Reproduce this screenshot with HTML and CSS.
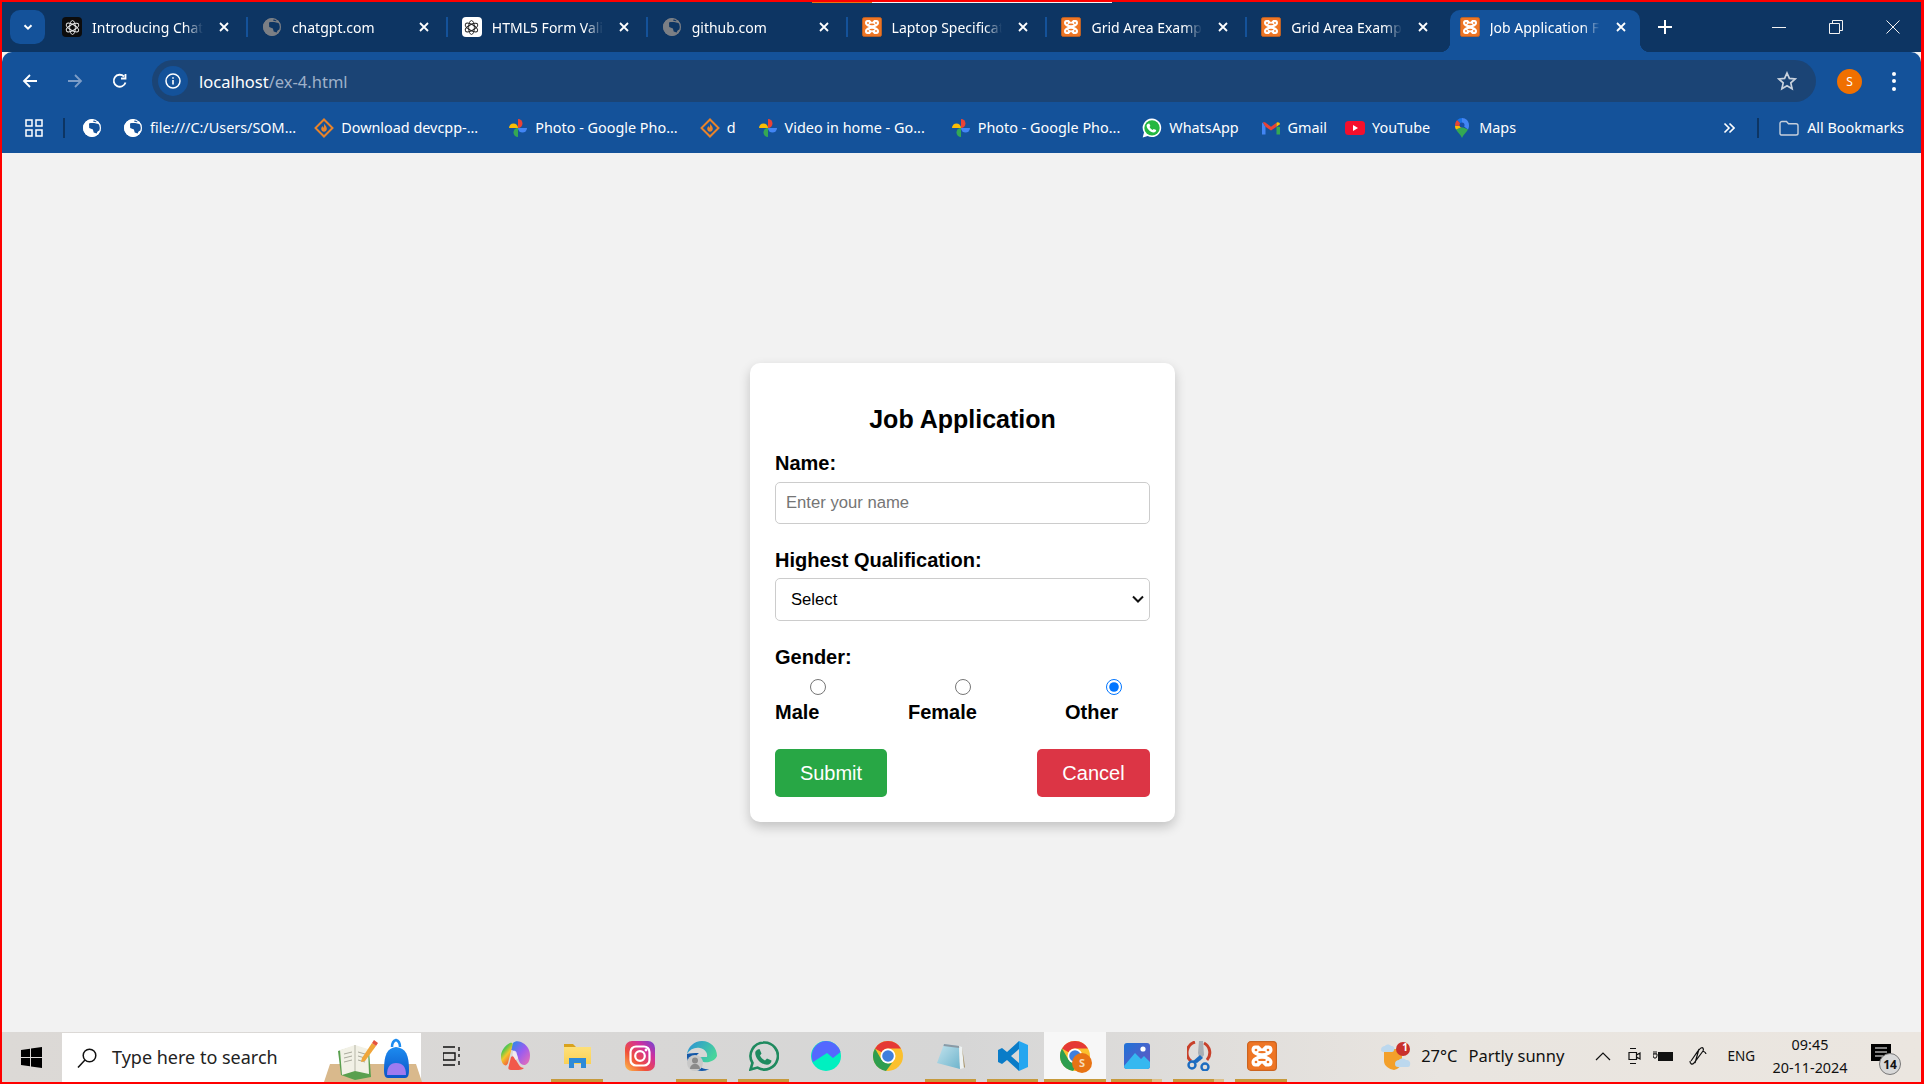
FILE: index.html
```html
<!DOCTYPE html>
<html lang="en">
<head>
  <meta charset="UTF-8">
  <meta name="viewport" content="width=device-width, initial-scale=1.0">
  <title>Job Application</title>
  <link rel="stylesheet" href="styles.css">
</head>
<body>
  <svg class="defs" aria-hidden="true">
    <defs>
      <linearGradient id="igGrad" x1="0" y1="1" x2="1" y2="0">
        <stop offset="0" stop-color="#fdc14a"/><stop offset=".35" stop-color="#f0513a"/><stop offset=".7" stop-color="#d12f9c"/><stop offset="1" stop-color="#6a47d8"/>
      </linearGradient>
      <linearGradient id="copGrad" x1="0" y1="0" x2=".6" y2="1">
        <stop offset="0" stop-color="#2fb6c8"/><stop offset=".35" stop-color="#5cc84a"/><stop offset=".6" stop-color="#f4c62a"/><stop offset="1" stop-color="#f0563e"/>
      </linearGradient>
      <linearGradient id="copGrad2" x1="0" y1="0" x2="1" y2="1">
        <stop offset="0" stop-color="#1f8fe8"/><stop offset=".5" stop-color="#9a5cf0"/><stop offset="1" stop-color="#f070b0"/>
      </linearGradient>
      <linearGradient id="edgeGrad" x1="0" y1="0" x2="1" y2=".5">
        <stop offset="0" stop-color="#2a8fd8"/><stop offset="1" stop-color="#48d49c"/>
      </linearGradient>
      <linearGradient id="photoGrad" x1="0" y1="0" x2="1" y2="1">
        <stop offset="0" stop-color="#1e73d8"/><stop offset="1" stop-color="#6a55c0"/>
      </linearGradient>
      <linearGradient id="bagGrad" x1="0" y1="0" x2="0" y2="1">
        <stop offset="0" stop-color="#1c8cf0"/><stop offset="1" stop-color="#0c55c8"/>
      </linearGradient>
      <linearGradient id="padGrad" x1="0" y1="0" x2="1" y2="1">
        <stop offset="0" stop-color="#c4e4ee"/><stop offset="1" stop-color="#6fb4cc"/>
      </linearGradient>
      <linearGradient id="folderGrad" x1="0" y1="0" x2="0" y2="1">
        <stop offset="0" stop-color="#fde07a"/><stop offset="1" stop-color="#fbd155"/>
      </linearGradient>
      <symbol id="i-xampp" viewBox="0 0 20 20">
        <rect x=".4" y=".4" width="19.200" height="19.200" rx="2.200" fill="#ee7524" stroke="#cc6420" stroke-width=".8"/>
        <path fill="#fff" d="M5.500 3h2.300L10 5.200 12.200 3h2.300c1.700 0 2.500 1.300 2.500 3 0 1.800-1.500 3-4 4 2.500 1 4 2.200 4 4 0 1.700-.8 3-2.500 3h-2.300L10 14.800 7.800 17H5.500C3.800 17 3 15.700 3 14c0-1.800 1.500-3 4-4C4.500 9 3 7.800 3 6c0-1.700.8-3 2.500-3z"/>
        <ellipse cx="10" cy="7.400" rx="2.600" ry=".8" fill="#ee7524"/>
        <ellipse cx="10" cy="12.600" rx="2.600" ry=".8" fill="#ee7524"/>
        <circle cx="6" cy="6" r=".9" fill="#ee7524"/>
        <circle cx="14" cy="6" r=".9" fill="#ee7524"/>
        <circle cx="6" cy="14" r=".9" fill="#ee7524"/>
        <circle cx="14" cy="14" r=".9" fill="#ee7524"/>
      </symbol>
      <symbol id="i-knot" viewBox="0 0 20 20">
        <g fill="none" stroke="currentColor" stroke-width="1.100">
          <ellipse cx="10" cy="10" rx="3.400" ry="8.200"/>
          <ellipse cx="10" cy="10" rx="3.400" ry="8.200" transform="rotate(60 10 10)"/>
          <ellipse cx="10" cy="10" rx="3.400" ry="8.200" transform="rotate(120 10 10)"/>
        </g>
      </symbol>
      <symbol id="i-globe" viewBox="0 0 20 20">
        <circle cx="10" cy="10" r="9" fill="currentColor"/>
        <path fill="var(--cut)" d="M7 5.500c3-1 7-.5 11.500 1.500.6 2 .4 4-.3 5.500-2 0-3 1-3.500 3l-3-1-.8-3-3.700-1.500zM12 1.200l-1 2.300 3 .7 2-1.200c-1.100-.9-2.500-1.500-4-1.800z"/>
        <circle cx="10" cy="10" r="8.400" fill="none" stroke="currentColor" stroke-width="1.200"/>
      </symbol>
      <symbol id="i-diamond" viewBox="0 0 20 20">
        <rect x="4" y="4" width="12" height="12" fill="none" stroke="#e8832a" stroke-width="2" transform="rotate(45 10 10)"/>
        <path fill="#e8832a" d="M10.500 5.500c.5 2 2.300 3.200 2.300 5.300 0 1.700-1.300 3-2.800 3s-2.800-1.300-2.800-3c0-1.200.7-2 1.400-2.800.2 1 .6 1.500 1.100 1.700.3-1.400.4-2.800.8-4.200z"/>
      </symbol>
      <symbol id="i-pinwheel" viewBox="0 0 20 20">
        <path fill="#fbbc04" d="M1 10a4.500 4.500 0 0 1 9 0z"/>
        <path fill="#ea4335" d="M10 1a4.500 4.500 0 0 1 0 9z"/>
        <path fill="#4285f4" d="M10 10h9a4.500 4.500 0 0 1-9 0z"/>
        <path fill="#34a853" d="M10 10v9a4.500 4.500 0 0 1 0-9z"/>
      </symbol>
      <symbol id="i-whatsapp" viewBox="0 0 20 20">
        <path fill="#fff" d="M10 .5a9.300 9.300 0 0 0-8 14L.7 19.400l5-1.300A9.300 9.300 0 1 0 10 .5z"/>
        <circle cx="10" cy="9.900" r="7.700" fill="#25b741"/>
        <path fill="#fff" d="M7.300 5.400l1.100 2.500-.9 1.200c.7 1.300 1.700 2.300 3.100 3l1.100-1.200 2.500 1.100c0 1.500-1.100 2.500-2.600 2.500-3.500-.2-6.900-3.600-7-6.900 0-1.100.9-2 2.700-2.200z"/>
      </symbol>
      <symbol id="i-gmail" viewBox="0 0 20 20">
        <path fill="#4285f4" d="M1 6v10.500h3.500V8.800L1.800 4.500C1.300 4.700 1 5.300 1 6z"/>
        <path fill="#ea4335" d="M1.800 4.500l2.700 4.300L10 12.500l5.500-3.700V4.800L10 8.800 4 4.300c-.8-.3-1.600-.2-2.200.2z"/>
        <path fill="#34a853" d="M15.500 16.500H19V9l-3.500-.2z"/>
        <path fill="#fbbc04" d="M15.500 8.800L19 6.300c0-1.700-1.700-2.600-3-1.900l-.5.400z"/>
      </symbol>
      <symbol id="i-youtube" viewBox="0 0 20 20">
        <rect y="3" width="20" height="14" rx="3.500" fill="#f50f2c"/>
        <path fill="#fff" d="M8 7l5 3-5 3z"/>
      </symbol>
      <symbol id="i-maps" viewBox="0 0 20 20">
        <path fill="#34a853" d="M10 20C8.800 17 5.800 14.500 4 11.500L10 9l6 2.500C14.200 14.500 11.200 17 10 20z"/>
        <path fill="#fbbc04" d="M4 11.500C3.200 10.400 3 9 3 7.500L7.500 8 10 9z"/>
        <path fill="#4285f4" d="M10 0c4 0 7 3.200 7 7.200 0 1.700-.3 3-1 4.300L10 7z"/>
        <path fill="#ea4335" d="M3 7.500C3 5 4 3 5.300 2L10 7 7.500 8z"/>
        <path fill="#1a73e8" d="M5.300 2C6.500.8 8.200 0 10 0v7z"/>
        <circle cx="10" cy="7" r="2.500" fill="#174ea6"/>
      </symbol>
      <symbol id="i-chrome" viewBox="0 0 30 30">
        <circle cx="15" cy="15" r="15" fill="#fbc02d"/>
        <path fill="#e53935" d="M15 0a15 15 0 0 1 13 7.500H15a7.500 7.500 0 0 0-6.500 3.750L2 7.500A15 15 0 0 1 15 0z"/>
        <path fill="#2e9e4f" d="M2 7.500a15 15 0 0 0 11 22.400l6-7.900-4 .5-6.500-3.750z"/>
        <circle cx="15" cy="15" r="7.500" fill="#fff"/>
        <circle cx="15" cy="15" r="5.800" fill="#3f7fdc"/>
      </symbol>
    </defs>
  </svg>

  <div class="screen">
    <div class="load-bar"></div>

    <div class="tabstrip">
      <button class="tab-search" aria-label="Search tabs">
        <svg width="12" height="12" viewBox="0 0 12 12"><path d="M2.500 4.200L6 7.700l3.500-3.500" fill="none" stroke="#fff" stroke-width="2"/></svg>
      </button>
      <div class="tab">
        <span class="fav fav-dark"><svg width="17" height="17"><use href="#i-knot"/></svg></span>
        <span class="tab-title">Introducing Chat</span>
        <svg class="tab-close" viewBox="0 0 10 10"><path d="M1 1l8 8M9 1l-8 8"/></svg>
      </div>
      <div class="tab">
        <svg class="fav globe-grey"><use href="#i-globe"/></svg>
        <span class="tab-title">chatgpt.com</span>
        <svg class="tab-close" viewBox="0 0 10 10"><path d="M1 1l8 8M9 1l-8 8"/></svg>
      </div>
      <div class="tab">
        <span class="fav fav-light"><svg width="17" height="17"><use href="#i-knot"/></svg></span>
        <span class="tab-title">HTML5 Form Vali</span>
        <svg class="tab-close" viewBox="0 0 10 10"><path d="M1 1l8 8M9 1l-8 8"/></svg>
      </div>
      <div class="tab">
        <svg class="fav globe-grey"><use href="#i-globe"/></svg>
        <span class="tab-title">github.com</span>
        <svg class="tab-close" viewBox="0 0 10 10"><path d="M1 1l8 8M9 1l-8 8"/></svg>
      </div>
      <div class="tab">
        <svg class="fav"><use href="#i-xampp"/></svg>
        <span class="tab-title">Laptop Specificat</span>
        <svg class="tab-close" viewBox="0 0 10 10"><path d="M1 1l8 8M9 1l-8 8"/></svg>
      </div>
      <div class="tab">
        <svg class="fav"><use href="#i-xampp"/></svg>
        <span class="tab-title">Grid Area Examp</span>
        <svg class="tab-close" viewBox="0 0 10 10"><path d="M1 1l8 8M9 1l-8 8"/></svg>
      </div>
      <div class="tab tab-last">
        <svg class="fav"><use href="#i-xampp"/></svg>
        <span class="tab-title">Grid Area Examp</span>
        <svg class="tab-close" viewBox="0 0 10 10"><path d="M1 1l8 8M9 1l-8 8"/></svg>
      </div>
      <div class="tab tab-active">
        <svg class="fav"><use href="#i-xampp"/></svg>
        <span class="tab-title">Job Application F</span>
        <svg class="tab-close" viewBox="0 0 10 10"><path d="M1 1l8 8M9 1l-8 8"/></svg>
      </div>
      <svg class="new-tab" viewBox="0 0 14 14"><path d="M7 0v14M0 7h14"/></svg>
      <div class="win-controls">
        <svg viewBox="0 0 14 14"><path d="M0 7.500h14"/></svg>
        <svg viewBox="0 0 14 14"><path d="M.5 3.500h10v10H.500zM3.500 3.500V.5h10v10h-3"/></svg>
        <svg viewBox="0 0 14 14"><path d="M.5.5l13 13M13.500.5l-13 13"/></svg>
      </div>
    </div>

    <div class="chrome-body">
      <div class="toolbar">
        <span class="nav-btn">
          <svg viewBox="0 0 16 16" class="nav-icon"><path d="M15 8H2M8 2L2 8l6 6"/></svg>
        </span>
        <span class="nav-btn nav-off">
          <svg viewBox="0 0 16 16" class="nav-icon"><path d="M1 8h13M8 2l6 6-6 6"/></svg>
        </span>
        <span class="nav-btn">
          <svg viewBox="0 0 16 16" class="nav-icon"><path d="M13.500 9.500A6 6 0 1 1 12 3.500M13.500 1v4.500H9"/></svg>
        </span>
        <div class="omnibox">
          <span class="site-chip">
            <svg width="16" height="16" viewBox="0 0 16 16"><circle cx="8" cy="8" r="7" fill="none" stroke="#fff" stroke-width="1.500"/><path d="M8 7v4.500M8 4.200v1.500" stroke="#fff" stroke-width="1.600"/></svg>
          </span>
          <span class="url">localhost<span class="url-path">/ex-4.html</span></span>
          <svg class="star" viewBox="0 0 20 20"><path d="M10 2l2.400 5.400 5.800.6-4.400 3.900 1.300 5.800L10 14.700l-5.100 3 1.300-5.800L1.800 8l5.800-.6z"/></svg>
        </div>
        <span class="avatar">S</span>
        <span class="menu-dots"><i></i><i></i><i></i></span>
      </div>

      <div class="bookmarks">
        <svg class="apps" viewBox="0 0 18 18"><path d="M1 1h6v6H1zM11 1h6v6h-6zM1 11h6v6H1zM11 11h6v6h-6z"/></svg>
        <span class="bar-sep"></span>
        <svg class="bm-icon globe-white first-globe"><use href="#i-globe"/></svg>
        <div class="bm-list">
          <a class="bm"><svg class="bm-icon globe-white"><use href="#i-globe"/></svg>file:///C:/Users/SOM...</a>
          <a class="bm bm-tight"><svg class="bm-icon"><use href="#i-diamond"/></svg>Download devcpp-...</a>
          <a class="bm bm-wide"><svg class="bm-icon"><use href="#i-pinwheel"/></svg>Photo - Google Pho...</a>
          <a class="bm"><svg class="bm-icon"><use href="#i-diamond"/></svg>d</a>
          <a class="bm"><svg class="bm-icon"><use href="#i-pinwheel"/></svg>Video in home - Go...</a>
          <a class="bm bm-loose"><svg class="bm-icon"><use href="#i-pinwheel"/></svg>Photo - Google Pho...</a>
          <a class="bm"><svg class="bm-icon"><use href="#i-whatsapp"/></svg>WhatsApp</a>
          <a class="bm"><svg class="bm-icon"><use href="#i-gmail"/></svg>Gmail</a>
          <a class="bm bm-tight"><svg class="bm-icon"><use href="#i-youtube"/></svg>YouTube</a>
          <a class="bm"><svg class="bm-icon"><use href="#i-maps"/></svg>Maps</a>
        </div>
        <svg class="bm-more" viewBox="0 0 12 12"><path d="M1.500 1.500L6 6l-4.500 4.500M6.500 1.500L11 6l-4.500 4.500"/></svg>
        <span class="bar-sep bar-sep-right"></span>
        <a class="bm bm-all">
          <svg class="bm-icon folder" viewBox="0 0 20 16"><path d="M1 3.500c0-1 .7-2 2-2h4.500l2 2.300H17c1.300 0 2 .7 2 2v7.700c0 1-.7 1.500-2 1.500H3c-1.300 0-2-.5-2-1.500z"/></svg>All Bookmarks
        </a>
      </div>
    </div>

    <main class="page">
      <form class="card">
        <h2>Job Application</h2>
        <label class="field-label" for="name">Name:</label>
        <input class="text-input" type="text" id="name" placeholder="Enter your name">
        <label class="field-label" for="qual">Highest Qualification:</label>
        <div class="select-wrap">
          <select class="select-input" id="qual">
            <option>Select</option>
          </select>
          <svg class="select-arrow" viewBox="0 0 12 8"><path d="M1 1.500l5 5 5-5"/></svg>
        </div>
        <div class="field-label">Gender:</div>
        <div class="gender-row">
          <label class="gender gender-male"><input type="radio" name="gender">Male</label>
          <label class="gender gender-female"><input type="radio" name="gender">Female</label>
          <label class="gender gender-other"><input type="radio" name="gender" checked>Other</label>
        </div>
        <div class="actions">
          <button type="button" class="btn btn-submit">Submit</button>
          <button type="button" class="btn btn-cancel">Cancel</button>
        </div>
      </form>
    </main>

    <footer class="taskbar">
      <div class="start">
        <svg width="21" height="21" viewBox="0 0 21 21"><path fill="#000" d="M0 3l9-1.300V10H0zM10 1.500L21 0v10H10zM0 11h9v8.300L0 18zM10 11h11v10l-11-1.500z"/></svg>
      </div>
      <div class="search">
        <svg class="search-icon" viewBox="0 0 20 20"><circle cx="12.500" cy="7.500" r="6.300"/><path d="M8 12L1 19.500"/></svg>
        <span class="search-text">Type here to search</span>
        <div class="search-art">
          <svg width="98" height="49" viewBox="0 0 98 49">
            <path d="M6 31h86l6 18H0z" fill="#d9b98c"/>
            <path d="M14 18l17-5 14 4 2 27-16 3-14-5z" fill="#5aa04f"/>
            <path d="M16 17l15-5 13 4 1 25-14-3-13 4z" fill="#f2f1e6"/>
            <path d="M31 12v26" stroke="#b7b7a8"/>
            <path d="M20 21l8-2M20 25l8-2M20 29l8-2M34 19l7 2M34 23l7 2M34 27l7 2" stroke="#a9a99c"/>
            <path d="M38 25l10-15 4 3-11 15-4 1z" fill="#f0a63a"/>
            <path d="M48 10l2-3 4 3-2 3z" fill="#e5533d"/>
            <path d="M60 37c0-15 3-22 12-23 10 1 13 8 13 23 0 5-1 8-4 8H64c-3 0-4-3-4-8z" fill="url(#bagGrad)"/>
            <path d="M68 14c0-4 1-6 4-7 3 1 4 3 4 7" fill="none" stroke="#1c8cf0" stroke-width="2.500"/>
            <path d="M63 42c0-8 3-12 9-12 7 0 10 4 10 12z" fill="#9d7bf0"/>
          </svg>
        </div>
      </div>
      <div class="task-slots">
        <div class="slot">
          <svg width="20" height="20" viewBox="0 0 20 20" fill="none" stroke="#111" stroke-width="1.400"><path d="M0 1h12M0 19h12M0 7h12v7H0zM16 1v4M16 8v3M16 15v4"/></svg>
        </div>
        <div class="slot">
          <svg width="30" height="30" viewBox="0 0 30 30">
            <path d="M13 2c2-2 5-2 8-1 5 2 9 7 9 13s-2 9-5 10c-2 .5-5-1-6-4l-2-6c-1-3-4-5-6-5 .5-3 1-5 2-7z" fill="url(#copGrad2)"/>
            <path d="M1 15c0-5 4-11 9-13 2-.5 3 .5 2.500 2L10 14l-2 8c-1 3-3 3-5 1-1.500-2-2-5-2-8z" fill="url(#copGrad)"/>
            <path d="M11 16c1-1 2-1 3 0l5 8c1 2 3 3 5 3-2 2-5 2-8 2h-5c-2 0-3-1-2.500-3z" fill="#f2584a"/>
            <path d="M13 10c1.500-.5 3 0 3.500 1.500l1.500 6-2.500 1.500-3-5z" fill="#f4ecf6" opacity=".85"/>
          </svg>
        </div>
        <div class="slot slot-on">
          <svg width="28" height="24" viewBox="0 0 28 24"><path d="M1 0h9l3 3H1z" fill="#d9a21e"/><path d="M1 3h27v17H1z" fill="url(#folderGrad)"/><path d="M6 24v-10h17v10h-5v-5h-7v5z" fill="#2d8ad8"/></svg>
        </div>
        <div class="slot">
          <svg width="30" height="30" viewBox="0 0 30 30"><rect width="30" height="30" rx="7" fill="url(#igGrad)"/><rect x="5.500" y="5.500" width="19" height="19" rx="5.500" fill="none" stroke="#fff" stroke-width="2.200"/><circle cx="15" cy="15" r="4.800" fill="none" stroke="#fff" stroke-width="2.200"/><circle cx="21" cy="9" r="1.400" fill="#fff"/></svg>
        </div>
        <div class="slot slot-on">
          <svg width="30" height="30" viewBox="0 0 30 30"><path d="M15 0C7 0 1 6 0 13c3-5 8-7 13-6 5 1 8 5 7 9h-7c-1 4 4 6 9 5 4-1 7-3 8-6C30 7 24 0 15 0z" fill="url(#edgeGrad)"/><path d="M0 13c-1 9 6 17 15 17 3 0 5-1 7-2-6 1-12-3-13-9-.5-3 1-6 3-7-5 0-9 0-12 1z" fill="#1458a8"/><circle cx="8" cy="22" r="8" fill="#c8c8c8"/><circle cx="8" cy="19.500" r="3" fill="#8a8a8a"/><path d="M3 28c0-3 2-5 5-5s5 2 5 5z" fill="#8a8a8a"/></svg>
        </div>
        <div class="slot slot-on">
          <svg width="30" height="30" viewBox="0 0 30 30"><path d="M15 1.500a13.500 13.500 0 0 0-11.500 20.500L1.500 28.500l7-1.900A13.500 13.500 0 1 0 15 1.500z" fill="none" stroke="#1f8a5f" stroke-width="2.600"/><path d="M10.500 8l2 4.500-1.500 2c1 2.200 2.700 3.800 5 5l2-2 4.500 2c0 2.600-2 4.300-4.500 4.300-6-.4-11.500-6-11.800-11.800 0-2 1.600-3.600 4.300-4z" fill="#1f8a5f"/></svg>
        </div>
        <div class="slot">
          <svg width="30" height="30" viewBox="0 0 30 30"><circle cx="15" cy="15" r="15" fill="#00f0c0"/><path d="M15 0a15 15 0 0 1 14.500 11l-7.500 6-6-5-14 9A15 15 0 0 1 15 0z" fill="#5468ff"/></svg>
        </div>
        <div class="slot">
          <svg width="30" height="30"><use href="#i-chrome"/></svg>
        </div>
        <div class="slot slot-on">
          <svg width="28" height="26" viewBox="0 0 28 26"><path d="M7 1l15 2 1 23-23-6z" fill="url(#padGrad)"/><path d="M22 3l3 1 2 21-4 1z" fill="#eef2f2"/><path d="M25 4l3 20-1 1z" fill="#a89468"/><path d="M7 1l15 2 .2 2L6.500 3z" fill="#8b99a4"/></svg>
        </div>
        <div class="slot slot-on">
          <svg width="30" height="30" viewBox="0 0 30 30"><path d="M21 0v8l-8 7 8 7v8L9 19l-5 4-4-2v-12l4-2 5 4z" fill="#0a7cc8"/><path d="M21 0l9 4v22l-9 4z" fill="#25a6f0"/></svg>
        </div>
        <div class="slot slot-on slot-active">
          <span class="chrome-s">
            <svg width="30" height="30"><use href="#i-chrome"/></svg>
            <span class="chrome-badge">S</span>
          </span>
        </div>
        <div class="slot slot-split">
          <svg width="26" height="26" viewBox="0 0 26 26"><rect width="26" height="26" rx="3" fill="url(#photoGrad)"/><path d="M0 23l11-13 6 6 3-3 6 6v4c0 2-1 3-3 3H3c-2 0-3-1-3-3z" fill="#35b8f0"/><circle cx="19" cy="6" r="2.600" fill="#fff"/></svg>
        </div>
        <div class="slot slot-split">
          <svg width="25" height="30" viewBox="0 0 25 30"><path d="M8 1a11 11 0 0 0-4 19" fill="none" stroke="#c8402a" stroke-width="3"/><path d="M17 2a11 11 0 0 1 3 17" fill="none" stroke="#c8402a" stroke-width="3"/><path d="M12 0h4l1 14-4 6-2-8z" fill="#a8aeb4"/><path d="M5 21l8-7 3 3-6 5" fill="#1c6cc0"/><circle cx="5" cy="24" r="3.500" fill="none" stroke="#1c6cc0" stroke-width="2.400"/><circle cx="18" cy="26" r="3.500" fill="none" stroke="#1c6cc0" stroke-width="2.400"/></svg>
        </div>
        <div class="slot slot-on">
          <svg width="30" height="30"><use href="#i-xampp"/></svg>
        </div>
      </div>

      <div class="tray">
        <svg class="weather-icon" width="30" height="30" viewBox="0 0 30 30">
          <path d="M3 8h18v12c0 5-4 8-8 9-5-1-10-4-10-9z" fill="#f3a02b"/>
          <path d="M0 9c0-3 2-4 4-4 1-2 5-2 6 0 3 0 4 2 3 4 0 1-1 2-2 2H3C1 11 0 10 0 9z" fill="#bcd8ee"/>
          <path d="M14 23c0-3 2-4 4-4 1-2 5-2 7 0 3 0 5 2 4 5 0 1-1 2-2 2H17c-2 0-3-1-3-3z" fill="#bcd8ee"/>
          <circle cx="22" cy="8" r="7" fill="#c9302c"/>
        </svg>
        <span class="weather-badge">1</span>
        <span class="temp">27°C</span>
        <span class="weather-text">Partly sunny</span>
        <svg class="tray-icon tray-chevron" viewBox="0 0 16 10"><path d="M1 9l7-7 7 7"/></svg>
        <svg class="tray-icon tray-cam" viewBox="0 0 14 18"><path d="M2 5.500h7.500v7H2zM9.500 8l3.500-2v6l-3.500-2M3 1.500h6M3 16.500h6"/></svg>
        <svg class="tray-battery" viewBox="0 0 20 12"><path d="M5 2h15v9H5z" fill="#111"/><path d="M1 1v3M3 1v3M0 4h4v2L3 8H1L0 6z" fill="none" stroke="#111"/></svg>
        <svg class="tray-icon tray-pen" viewBox="0 0 20 20"><path d="M2 15c0 3 2 4 4 2l9-12c1-2 0-4-2-3-1 .5-2 2-3 3L3 15M15 5c2 1 3 2 3 3M11 3l-4 14"/></svg>
        <span class="lang">ENG</span>
        <div class="clock"><span>09:45</span><span>20-11-2024</span></div>
        <div class="notif">
          <svg width="20" height="17" viewBox="0 0 20 17"><path fill="#000" d="M0 0h20v17H0z"/><path d="M4 4h12M4 8h12M4 12h8" stroke="#fff"/></svg>
          <span class="notif-count">14</span>
        </div>
      </div>
    </footer>
  </div>
</body>
</html>
```

FILE: styles.css
```css
* {
  box-sizing: border-box;
}
html, body {
  margin: 0;
  height: 100%;
}
body {
  font-family: "Liberation Sans", Arial, sans-serif;
  overflow: hidden;
}
.defs {
  position: absolute;
  width: 0;
  height: 0;
}
.screen {
  position: relative;
  width: 1924px;
  height: 1084px;
  border: solid #ff0000;
  border-width: 2px 3px 2px 2px;
  display: flex;
  flex-direction: column;
  background: #f2f2f2;
}
.load-bar {
  position: absolute;
  top: 0;
  left: 810px;
  width: 300px;
  height: 1px;
  background: linear-gradient(to right, #e8760e 60px, #f4f4f4 60px);
}

/* tab strip */
.tabstrip {
  height: 50px;
  flex: none;
  display: flex;
  padding-left: 8px;
  padding-top: 8px;
  background: #0d3563;
  font-family: "Noto Sans", sans-serif;
  font-size: 14px;
  color: #fff;
}
.tab-search {
  width: 35px;
  height: 34px;
  margin-right: 3px;
  border: none;
  padding: 0;
  border-radius: 10px;
  background: #14529a;
  display: flex;
  align-items: center;
  justify-content: center;
}
.tab {
  position: relative;
  width: 199.900px;
  height: 42px;
  flex: none;
  display: flex;
  align-items: center;
  padding: 0 19px 8px 14px;
}
.tab::after {
  content: "";
  position: absolute;
  right: 0;
  top: 7px;
  width: 2px;
  height: 20px;
  background: #14529a;
}
.tab-last::after,
.tab-active::after {
  display: none;
}
.fav {
  width: 20px;
  height: 20px;
  flex: none;
  margin-right: 10px;
}
.fav-dark,
.fav-light {
  display: flex;
  align-items: center;
  justify-content: center;
  border-radius: 4px;
}
.fav-dark {
  background: #0c0c0c;
  color: #e8e8e8;
}
.fav-light {
  background: #fff;
  color: #222;
}
.globe-grey {
  color: #7b7f85;
  --cut: #0d3563;
}
.tab-title {
  flex: 1;
  min-width: 0;
  white-space: nowrap;
  -webkit-mask-image: linear-gradient(to right, #000 84%, transparent 100%);
  mask-image: linear-gradient(to right, #000 84%, transparent 100%);
}
.tab-close {
  width: 10px;
  height: 10px;
  flex: none;
  margin-left: 16px;
  fill: none;
  stroke: #fff;
  stroke-width: 1.800;
}
.tab-active {
  width: 190px;
  margin-left: 2.500px;
  margin-right: 7px;
  padding: 0 14px 8px 10px;
  background: #14529a;
  border-radius: 10px 10px 0 0;
}
.tab-active .fav {
  margin-right: 10px;
}
.tab-active::before {
  content: "";
  position: absolute;
  left: -10px;
  right: -10px;
  bottom: 0;
  height: 10px;
  background:
    radial-gradient(circle at 0 0, #0d3563 10px, #14529a 10.500px) left bottom / 10px 10px no-repeat,
    radial-gradient(circle at 100% 0, #0d3563 10px, #14529a 10.500px) right bottom / 10px 10px no-repeat;
  pointer-events: none;
}
.new-tab {
  width: 14px;
  height: 14px;
  flex: none;
  margin-top: 10px;
  margin-left: 11px;
  fill: none;
  stroke: #fff;
  stroke-width: 2;
}
.win-controls {
  margin-left: auto;
  display: flex;
  gap: 43px;
  padding-right: 21px;
  height: 34px;
  align-items: center;
}
.win-controls svg {
  width: 14px;
  height: 14px;
  fill: none;
  stroke: #f2f2f2;
  stroke-width: 1;
}

/* toolbar */
.chrome-body {
  flex: none;
  background: #14529a;
  border-radius: 10px 10px 0 0;
  font-family: "Noto Sans", sans-serif;
  color: #fff;
}
.toolbar {
  height: 58px;
  padding: 8px 0 8px 5px;
  display: flex;
  align-items: center;
}
.nav-btn {
  width: 45px;
  display: flex;
  justify-content: center;
}
.nav-icon {
  width: 16px;
  height: 16px;
  fill: none;
  stroke: #fff;
  stroke-width: 1.800;
}
.nav-off .nav-icon {
  stroke: #7d9dc7;
}
.omnibox {
  width: 1664px;
  height: 42px;
  margin-left: 10px;
  padding: 0 19px 0 6px;
  border-radius: 21px;
  background: #1b4475;
  display: flex;
  align-items: center;
}
.site-chip {
  width: 30px;
  height: 30px;
  border-radius: 50%;
  background: #14529a;
  display: flex;
  align-items: center;
  justify-content: center;
}
.url {
  margin-left: 11px;
  font-size: 16.500px;
  color: #fff;
}
.url-path {
  color: #9fb1c9;
}
.star {
  width: 20px;
  height: 20px;
  margin-left: auto;
  fill: none;
  stroke: #c9d2dd;
  stroke-width: 1.700;
}
.avatar {
  width: 25px;
  height: 25px;
  margin-left: 21px;
  border-radius: 50%;
  background: #f07000;
  font-size: 12px;
  display: flex;
  align-items: center;
  justify-content: center;
}
.menu-dots {
  margin-left: 30px;
  display: flex;
  flex-direction: column;
  gap: 3.500px;
}
.menu-dots i {
  width: 4px;
  height: 4px;
  border-radius: 50%;
  background: #fff;
}

/* bookmarks */
.bookmarks {
  height: 43px;
  padding: 0 0 8px 23px;
  display: flex;
  align-items: center;
  font-size: 14.400px;
}
.apps {
  width: 18px;
  height: 18px;
  fill: none;
  stroke: #fff;
  stroke-width: 1.500;
}
.bar-sep {
  width: 2px;
  height: 20px;
  margin-left: 20px;
  background: #0d3563;
}
.first-globe {
  margin-left: 17px;
}
.bm-icon {
  width: 20px;
  height: 20px;
  flex: none;
}
.globe-white {
  color: #fff;
  --cut: #14529a;
}
.bm-list {
  display: flex;
  gap: 22px;
  margin-left: 21px;
}
.bm {
  display: flex;
  align-items: center;
  gap: 7px;
  white-space: nowrap;
  color: #fff;
}
.bm-tight {
  margin-left: -4px;
}
.bm-wide {
  margin-left: 8px;
}
.bm-loose {
  margin-left: 4px;
}
.bm-more {
  width: 12px;
  height: 12px;
  margin-left: auto;
  fill: none;
  stroke: #fff;
  stroke-width: 1.600;
}
.bar-sep-right {
  margin-left: 22px;
}
.bm-all {
  margin-left: 20px;
  margin-right: 17px;
  gap: 8px;
}
.folder {
  fill: none;
  stroke: #c7d0dc;
  stroke-width: 1.400;
}

/* page */
.page {
  flex: 1;
  min-height: 0;
  display: flex;
  align-items: center;
  justify-content: center;
  padding-left: 2px;
}
.card {
  width: 425px;
  padding: 41px 25px 25px;
  background: #fff;
  border-radius: 10px;
  box-shadow: 0 5px 12px rgba(0, 0, 0, 0.2);
  display: flex;
  flex-direction: column;
  color: #000;
}
.card h2 {
  margin: 0 0 18px;
  font-size: 25px;
  line-height: 30px;
  text-align: center;
}
.field-label {
  font-size: 20px;
  font-weight: bold;
  line-height: 23px;
}
.text-input,
.select-input {
  width: 100%;
  font-family: "Liberation Sans", Arial, sans-serif;
  font-size: 16.670px;
  border: 1px solid #ccc;
  border-radius: 5px;
  background: #fff;
  color: #000;
}
.text-input {
  height: 42px;
  margin: 7px 0 25px;
  padding: 0 10px;
}
.text-input::placeholder {
  color: #757575;
}
.select-wrap {
  position: relative;
  margin: 6px 0 25px;
}
.select-input {
  display: block;
  height: 43px;
  padding: 0 15px;
  appearance: none;
}
.select-arrow {
  position: absolute;
  right: 6px;
  top: 17px;
  width: 12px;
  height: 8px;
  fill: none;
  stroke: #111;
  stroke-width: 2;
  pointer-events: none;
}
.gender-row {
  display: grid;
  grid-template-columns: 133px 157px 1fr;
  margin-top: 10px;
}
.gender {
  font-size: 20px;
  font-weight: bold;
  line-height: 23px;
  display: flex;
  flex-direction: column;
  align-items: flex-start;
  gap: 6px;
}
.gender input {
  width: 16px;
  height: 16px;
  margin: 0;
}
.gender-male input {
  margin-left: 35px;
}
.gender-female input {
  margin-left: 47px;
}
.gender-other input {
  margin-left: 41px;
}
.actions {
  display: flex;
  justify-content: space-between;
  margin-top: 25px;
}
.btn {
  height: 48px;
  border: none;
  border-radius: 5px;
  color: #fff;
  font-family: "Liberation Sans", Arial, sans-serif;
  font-size: 20px;
}
.btn-submit {
  width: 112px;
  background: #28a745;
}
.btn-cancel {
  width: 113px;
  background: #dc3545;
}

/* taskbar */
.taskbar {
  height: 50px;
  flex: none;
  display: flex;
  background: linear-gradient(to right, #dcd9d6, #d6d6d6 50%, #e9e5e0 75%, #ebe6e0);
  font-family: "Noto Sans", sans-serif;
  color: #111;
}
.start {
  width: 60px;
  display: flex;
  align-items: center;
  justify-content: center;
  padding-right: 2px;
}
.search {
  position: relative;
  width: 359px;
  margin-top: 1px;
  background: #fff;
  display: flex;
  align-items: center;
}
.search-icon {
  width: 20px;
  height: 20px;
  margin-left: 15px;
  fill: none;
  stroke: #111;
  stroke-width: 1.500;
}
.search-text {
  margin-left: 15px;
  margin-bottom: 2px;
  font-size: 18px;
  color: #222;
}
.search-art {
  position: absolute;
  right: -1px;
  bottom: 0;
  height: 49px;
}
.task-slots {
  display: flex;
  margin-left: 1px;
}
.slot {
  position: relative;
  width: 62.200px;
  display: flex;
  align-items: center;
  justify-content: center;
  padding-bottom: 3px;
}
.slot-on::after,
.slot-split::after {
  content: "";
  position: absolute;
  left: 5px;
  right: 6px;
  bottom: 0;
  height: 3px;
  background: #c69a3c;
}
.slot-split::after {
  background: linear-gradient(to right, #c69a3c 41px, #dcc08a 41px);
}
.slot-active {
  background: #f7f7f7;
}
.slot-active::after {
  left: 0;
  right: 0;
}
.chrome-s {
  position: relative;
  display: flex;
}
.chrome-badge {
  position: absolute;
  right: -2px;
  bottom: -2px;
  width: 20px;
  height: 20px;
  border-radius: 50%;
  background: #e87314;
  color: #f5d9b8;
  font-size: 11px;
  font-weight: bold;
  display: flex;
  align-items: center;
  justify-content: center;
}
.tray {
  position: relative;
  margin-left: auto;
  display: flex;
  align-items: center;
  padding-right: 30px;
  padding-bottom: 3px;
  font-size: 16.500px;
}
.weather-badge {
  position: absolute;
  left: 17px;
  top: 8px;
  width: 14px;
  font-size: 10px;
  font-weight: bold;
  color: #fff;
  text-align: center;
  line-height: 14px;
}
.temp {
  margin-left: 10px;
}
.weather-text {
  margin-left: 11px;
}
.tray-icon {
  fill: none;
  stroke: #111;
  stroke-width: 1.200;
}
.tray-chevron {
  width: 16px;
  height: 10px;
  margin-left: 31px;
}
.tray-cam {
  width: 14px;
  height: 18px;
  margin-left: 16px;
}
.tray-battery {
  width: 20px;
  height: 12px;
  margin-left: 12px;
}
.tray-pen {
  width: 20px;
  height: 20px;
  margin-left: 15px;
}
.lang {
  margin-left: 19px;
  font-size: 13.500px;
}
.clock {
  width: 76px;
  margin-left: 17px;
  display: flex;
  flex-direction: column;
  align-items: center;
  font-size: 14.400px;
  line-height: 23px;
}
.notif {
  position: relative;
  margin-left: 23px;
  display: flex;
  margin-top: -6px;
}
.notif-count {
  position: absolute;
  left: 8px;
  top: 9px;
  width: 22px;
  height: 22px;
  border-radius: 50%;
  border: 1px solid #777;
  background: #d8d8d8;
  font-size: 12px;
  font-weight: bold;
  display: flex;
  align-items: center;
  justify-content: center;
}
```
